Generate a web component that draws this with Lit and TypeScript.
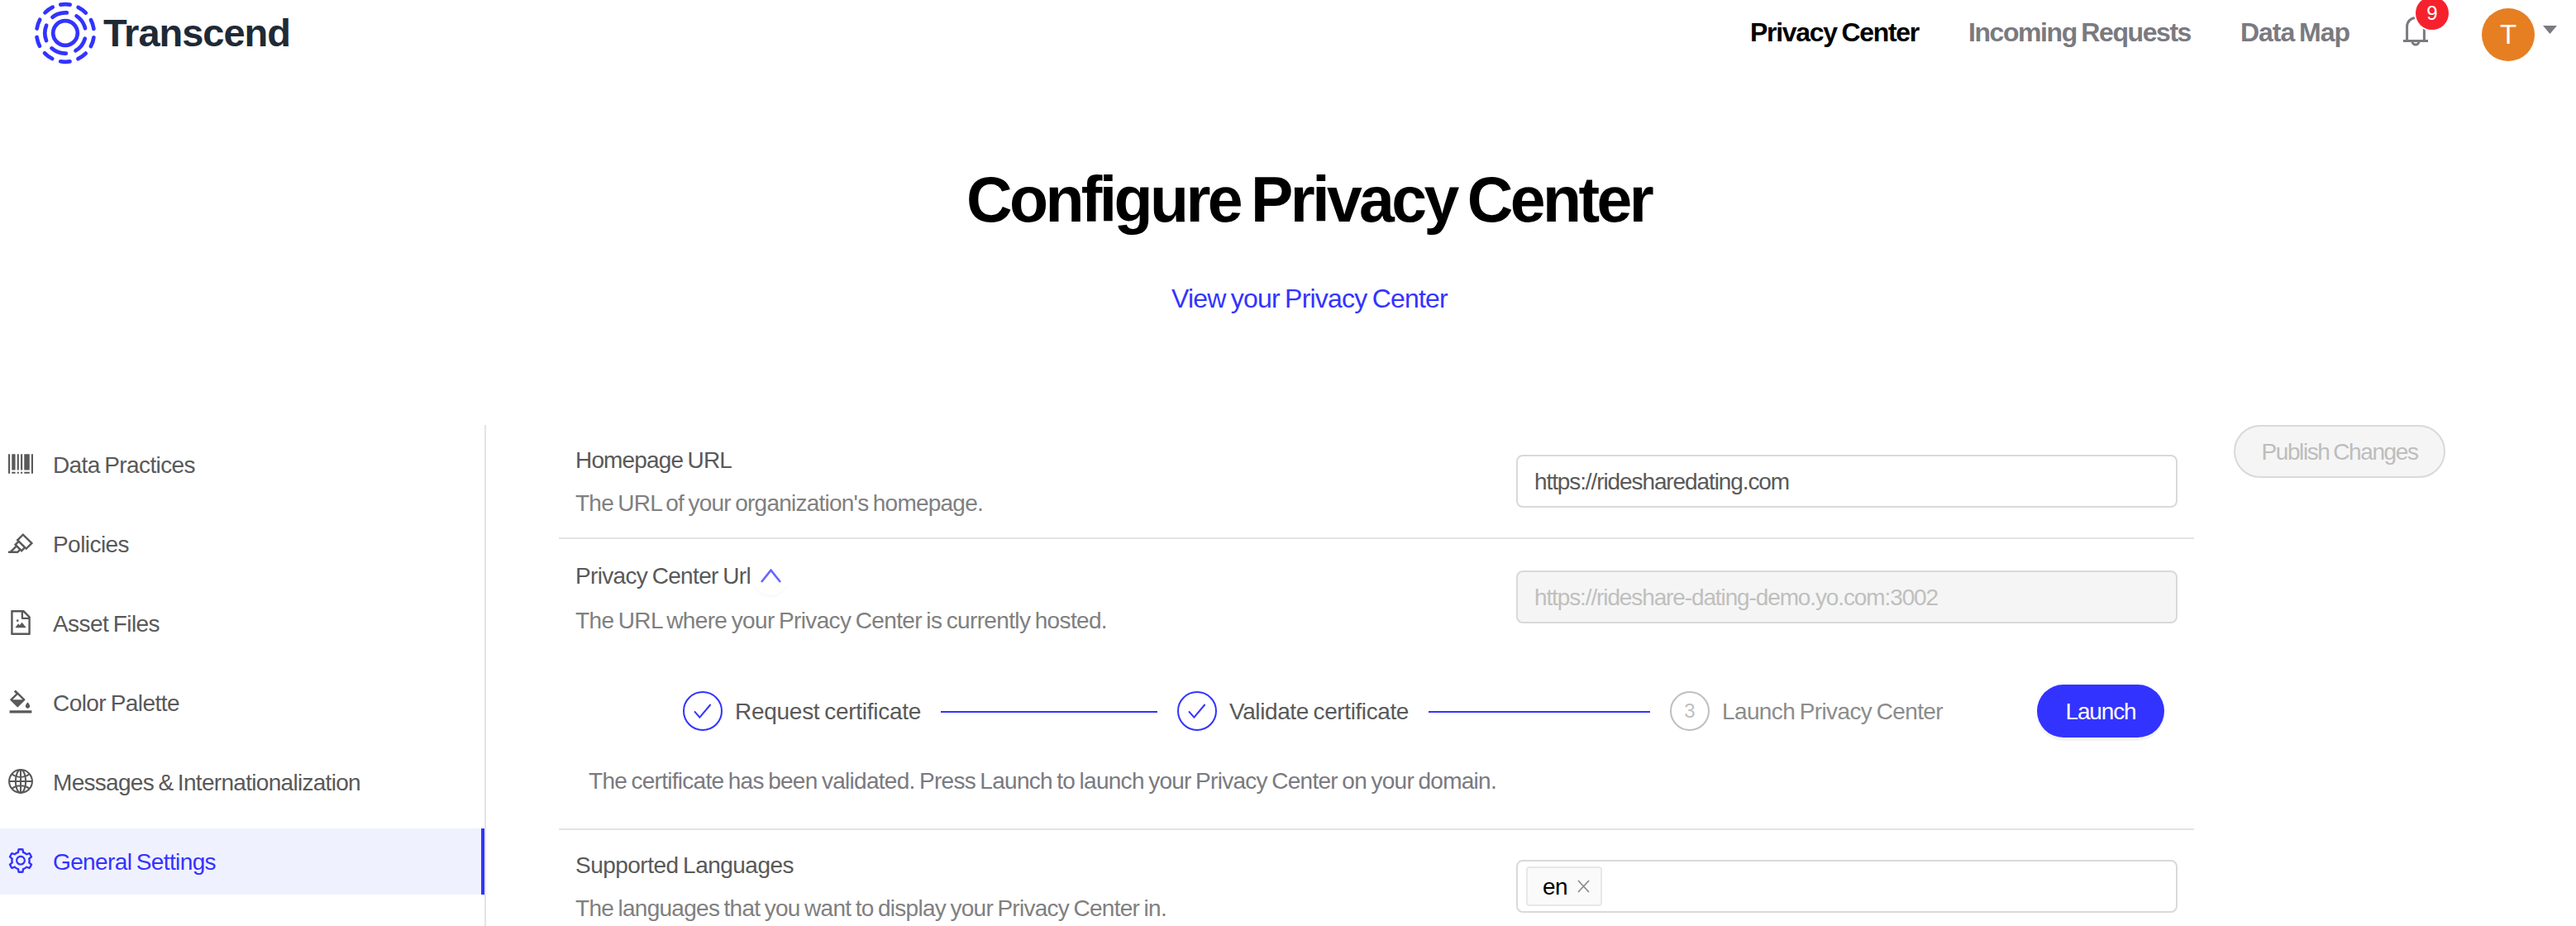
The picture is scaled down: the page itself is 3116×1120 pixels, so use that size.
import { LitElement, html, svg, css, nothing, type TemplateResult } from "lit";
import { customElement, property } from "lit/decorators.js";
import { classMap } from "lit/directives/class-map.js";

/** A single line of text whose letter spacing is tuned so that it spans `width` pixels. */
@customElement("tracked-text")
class TrackedText extends LitElement {
  @property({ type: Number }) width = 0;

  static styles = css`
    :host {
      display: inline-block;
      white-space: nowrap;
      word-spacing: -0.06em;
    }
  `;

  firstUpdated() {
    const length = (this.textContent ?? "").length;
    if (!this.width || !length) return;
    const natural = this.getBoundingClientRect().width;
    this.style.letterSpacing = `${(this.width - natural) / length}px`;
  }

  render() {
    return html`<slot></slot>`;
  }
}

const line = (text: string, width: number) =>
  html`<tracked-text class="text" .width=${width}>${text}</tracked-text>`;

const icons: Record<string, TemplateResult> = {
  barcode: svg`<path d="M64 160h64v704H64zM897 160h64v704h-64zM192 160h128v576H192zM384 160h64v576h-64zM513 160h64v576h-64zM639 160h194v576H639zM192 800h129v64H192zM384 800h64v64h-64zM513 800h64v64h-64zM640 800h193v64H640z"/>`,
  highlight: svg`<path d="M957.6 507.4L603.2 158.2a7.9 7.9 0 0 0-11.2 0L353.3 393.4a8.03 8.03 0 0 0-.1 11.3l.1.1 40 39.4-117.2 115.3a8.03 8.03 0 0 0-.1 11.3l.1.1 39.5 38.9-189.1 187H72.1c-4.4 0-8.1 3.6-8.1 8V860c0 4.4 3.6 8 8 8h344.9c2.1 0 4.1-.8 5.6-2.3l76.1-75.6 40.4 39.8a7.9 7.9 0 0 0 11.2 0l117.1-115.6 40.1 39.5a7.9 7.9 0 0 0 11.2 0l238.7-235.2c3.4-3 3.4-8 .3-11.2zM389.8 796.2H229.6l134.4-133 80.1 78.9-54.3 54.1zm154.8-62.1L373.2 565.2l68.6-67.6 171.4 168.9-68.6 67.6zM713.1 658L450.3 399.1 597.6 254l262.8 259-147.3 145z"/>`,
  fileImage: svg`<path d="M553.1 509.1l-77.8 99.2-41.1-52.4a8 8 0 0 0-12.6 0l-99.8 127.2a7.98 7.98 0 0 0 6.3 12.9H696c6.7 0 10.4-7.7 6.3-12.9l-136.5-174a8.1 8.1 0 0 0-12.7 0zM360 442a40 40 0 1 0 80 0 40 40 0 1 0-80 0zm494.6-153.4L639.4 73.4c-6-6-14.1-9.4-22.6-9.4H192c-17.7 0-32 14.3-32 32v832c0 17.7 14.3 32 32 32h640c17.7 0 32-14.3 32-32V311.3c0-8.5-3.4-16.7-9.4-22.7zM790.2 326H602V137.8L790.2 326zm1.8 562H232V136h302v216a42 42 0 0 0 42 42h216v494z"/>`,
  bgColors: svg`<path d="M766.4 744.3c43.7 0 79.4-36.2 79.4-80.5 0-53.5-79.4-140.8-79.4-140.8S687 610.3 687 663.8c0 44.3 35.7 80.5 79.4 80.5zm-377.1-44.1c7.1 7.1 18.6 7.1 25.6 0l256.1-256c7.1-7.1 7.1-18.6 0-25.6l-256-256c-.6-.6-1.3-1.2-2-1.7l-78.2-78.2a9.11 9.11 0 0 0-12.8 0l-48 48a9.11 9.11 0 0 0 0 12.8l67.2 67.2-207.8 207.9c-7.1 7.1-7.1 18.6 0 25.6l255.9 256zm12.9-448.6l178.9 178.9H223.4l178.8-178.9zM904 816H120c-4.4 0-8 3.6-8 8v80c0 4.4 3.6 8 8 8h784c4.4 0 8-3.6 8-8v-80c0-4.4-3.6-8-8-8z"/>`,
  globe: svg`<g fill="none" stroke="currentColor" stroke-width="62"><circle cx="512" cy="512" r="416"/><ellipse cx="512" cy="512" rx="184" ry="416"/><path d="M512 96v832M96 512h832M196 250q140 106 316 106t316-106M196 774q140-106 316-106t316 106"/></g>`,
  setting: svg`<path d="M924.8 625.7l-65.5-56c3.1-19 4.7-38.4 4.7-57.8s-1.6-38.8-4.7-57.8l65.5-56a32.03 32.03 0 0 0 9.3-35.2l-.9-2.6a443.74 443.74 0 0 0-79.7-137.9l-1.8-2.1a32.12 32.12 0 0 0-35.1-9.5l-81.3 28.9c-30-24.6-63.5-44-99.7-57.6l-15.7-85a32.05 32.05 0 0 0-25.8-25.7l-2.7-.5c-52.1-9.4-106.9-9.4-159 0l-2.7.5a32.05 32.05 0 0 0-25.8 25.7l-15.8 85.4a351.86 351.86 0 0 0-99 57.4l-81.9-29.1a32 32 0 0 0-35.1 9.5l-1.8 2.1a446.02 446.02 0 0 0-79.7 137.9l-.9 2.6c-4.5 12.5-.8 26.5 9.3 35.2l66.3 56.6c-3.1 18.8-4.6 38-4.6 57.1 0 19.2 1.5 38.4 4.6 57.1L99 625.5a32.03 32.03 0 0 0-9.3 35.2l.9 2.6c18.1 50.4 44.9 96.9 79.7 137.9l1.8 2.1a32.12 32.12 0 0 0 35.1 9.5l81.9-29.1c29.8 24.5 63.1 43.9 99 57.4l15.8 85.4a32.05 32.05 0 0 0 25.8 25.7l2.7.5a449.4 449.4 0 0 0 159 0l2.7-.5a32.05 32.05 0 0 0 25.8-25.7l15.7-85a350 350 0 0 0 99.7-57.6l81.3 28.9a32 32 0 0 0 35.1-9.5l1.8-2.1c34.8-41.1 61.6-87.5 79.7-137.9l.9-2.6c4.5-12.3.8-26.3-9.3-35zM788.3 465.9c2.5 15.1 3.8 30.6 3.8 46.1s-1.3 31-3.8 46.1l-6.6 40.1 74.7 63.9a370.03 370.03 0 0 1-42.6 73.6L721 702.8l-31.4 25.8c-23.9 19.6-50.5 35-79.3 45.8l-38.1 14.3-17.9 97a377.5 377.5 0 0 1-85 0l-17.9-97.2-37.8-14.5c-28.5-10.8-55-26.2-78.7-45.7l-31.4-25.9-93.4 33.2c-17-22.9-31.2-47.6-42.6-73.6l75.5-64.5-6.5-40c-2.4-14.9-3.7-30.3-3.7-45.5 0-15.3 1.2-30.6 3.7-45.5l6.5-40-75.5-64.5c11.3-26.1 25.6-50.7 42.6-73.6l93.4 33.2 31.4-25.9c23.7-19.5 50.2-34.9 78.7-45.7l37.9-14.3 17.9-97.2c28.1-3.2 56.8-3.2 85 0l17.9 97 38.1 14.3c28.7 10.8 55.4 26.2 79.3 45.8l31.4 25.8 92.8-32.9c17 22.9 31.2 47.6 42.6 73.6L781.8 426l6.5 39.9zM512 326c-97.2 0-176 78.8-176 176s78.8 176 176 176 176-78.8 176-176-78.8-176-176-176zm79.2 255.2A111.6 111.6 0 0 1 512 614c-29.9 0-58-11.7-79.2-32.8A111.6 111.6 0 0 1 400 502c0-29.9 11.7-58 32.8-79.2C454 401.6 482.1 390 512 390c29.9 0 58 11.6 79.2 32.8A111.6 111.6 0 0 1 624 502c0 29.9-11.7 58-32.8 79.2z"/>`,
};

interface MenuItem {
  icon: string;
  text: string;
  width: number;
  active?: boolean;
}

const menu: MenuItem[] = [
  { icon: "barcode", text: "Data Practices", width: 172 },
  { icon: "highlight", text: "Policies", width: 92 },
  { icon: "fileImage", text: "Asset Files", width: 129 },
  { icon: "bgColors", text: "Color Palette", width: 153 },
  { icon: "globe", text: "Messages & Internationalization", width: 372 },
  { icon: "setting", text: "General Settings", width: 197, active: true },
];

const check = html`<svg class="check" viewBox="0 0 22 18">
  <path d="M1 9.3 L7.4 16.6 L20.6 1" />
</svg>`;

@customElement("app-root")
class AppRoot extends LitElement {
  static styles = css`
    :host {
      display: block;
      font-family: "Liberation Sans", Arial, sans-serif;
      font-size: 28px;
      line-height: 44px;
      color: #595959;
      background: #fff;
    }
    * {
      box-sizing: border-box;
    }
    svg {
      display: block;
      flex: none;
    }
    .page {
      height: 1120px;
      display: flex;
      flex-direction: column;
      overflow: hidden;
    }

    .header {
      height: 80px;
      flex: none;
      display: flex;
      justify-content: space-between;
      padding: 0 23px 0 41px;
    }
    .brand {
      display: flex;
      align-items: center;
      gap: 8px;
      color: #1f2a36;
      font-weight: 700;
      font-size: 47px;
      line-height: 80px;
    }
    .rings {
      width: 76px;
      height: 76px;
      fill: none;
      stroke: #33f;
      stroke-width: 4.7;
      stroke-linecap: round;
    }
    .nav {
      display: flex;
      align-items: flex-start;
      color: #7a7a80;
      font-size: 32px;
      font-weight: 700;
      line-height: 48px;
    }
    .nav-link {
      margin: 15px 60px 0 0;
    }
    .nav-link.current {
      color: #000;
    }
    .bell {
      position: relative;
      margin: 20px 65px 0 5px;
    }
    .bell-icon {
      width: 30px;
      height: 36px;
      fill: none;
      stroke: #7a7a80;
      stroke-width: 3;
    }
    .badge {
      position: absolute;
      left: 15px;
      top: -24px;
      width: 40px;
      height: 40px;
      border-radius: 20px;
      background: #f5222d;
      box-shadow: 0 0 0 2px #fff;
      color: #fff;
      font-size: 24px;
      font-weight: 400;
      line-height: 40px;
      text-align: center;
    }
    .avatar {
      width: 64px;
      height: 64px;
      margin: 10px 10px 0 0;
      border-radius: 50%;
      background: #e67f22;
      color: #fff;
      font-size: 33px;
      font-weight: 400;
      line-height: 63px;
      text-align: center;
    }
    .caret {
      width: 17px;
      height: 10px;
      margin-top: 31px;
      fill: #7a7a80;
    }

    .hero {
      flex: none;
      height: 434px;
      padding: 113px 0 0 52px;
      display: flex;
      flex-direction: column;
      align-items: center;
      gap: 48px;
    }
    .title {
      margin: 0 2px 0 0;
      color: #000;
      font-size: 77px;
      font-weight: 700;
      line-height: 96px;
    }
    .view-link {
      color: #33f;
      font-size: 32px;
      line-height: 48px;
    }

    .body {
      flex: 1;
      min-height: 0;
      display: flex;
      align-items: stretch;
    }
    .sidebar {
      width: 588px;
      flex: none;
      padding-top: 8px;
      border-right: 2px solid #e4e4e4;
      display: flex;
      flex-direction: column;
      gap: 16px;
    }
    .item {
      height: 80px;
      flex: none;
      display: flex;
      align-items: center;
      gap: 24px;
      padding-left: 10px;
    }
    .item .text,
    .step .text {
      padding-top: 2px;
    }
    .item.active {
      background: #f0f1ff;
      border-right: 4px solid #33f;
      color: #33f;
    }
    .item-icon {
      width: 30px;
      height: 30px;
      margin-bottom: 2px;
      fill: currentColor;
    }
    .content {
      width: 1978px;
      flex: none;
      margin: 0 48px 0 88px;
    }
    .setting {
      padding: 20px;
      border-bottom: 2px solid #e4e4e4;
    }
    .setting.hosted {
      padding: 22px 20px 35px;
    }
    .fields {
      display: flex;
      justify-content: space-between;
      align-items: flex-start;
    }
    .labels {
      display: flex;
      flex-direction: column;
      gap: 8px;
      margin: 1px 0 -1px;
    }
    .hosted .labels {
      gap: 10px;
    }
    .label {
      display: flex;
      height: 44px;
    }
    .hint {
      height: 44px;
      color: #808080;
    }
    .collapse {
      width: 44px;
      height: 44px;
      margin-left: 2px;
      border-radius: 50%;
      box-shadow: 0 4px 0 rgba(0, 0, 0, 0.015);
      display: flex;
      justify-content: center;
      padding-top: 13px;
    }
    .chevron {
      width: 25px;
      height: 17px;
      fill: none;
      stroke: #66f;
      stroke-width: 2.6;
    }
    .input {
      width: 800px;
      height: 64px;
      margin-top: 16px;
      border: 2px solid #d9d9d9;
      border-radius: 8px;
      padding: 0 20px;
      line-height: 61px;
      display: flex;
    }
    .input.disabled {
      background: #f5f5f5;
      color: #bfbfbf;
    }
    .input.tags {
      padding: 6px 10px;
    }
    .tag {
      width: 92px;
      height: 48px;
      border: 2px solid #e8e8e8;
      border-radius: 4px;
      background: #fafafa;
      color: #000;
      line-height: 46px;
      padding-left: 18px;
      display: flex;
      gap: 12px;
    }
    .remove {
      width: 15px;
      height: 16px;
      margin-top: 14px;
      fill: none;
      stroke: #8c8c8c;
      stroke-width: 1.8;
    }

    .wizard {
      margin: 56px 16px 0 130px;
      display: flex;
      align-items: center;
      justify-content: space-between;
    }
    .steps {
      display: grid;
      grid-template-columns: 288px 262px 280px 268px 332px;
      column-gap: 24px;
      align-items: center;
    }
    .step {
      height: 48px;
      display: flex;
      align-items: center;
      gap: 15px;
    }
    .step.waiting {
      color: #8c8c8c;
    }
    .dot {
      width: 48px;
      height: 48px;
      flex: none;
      border: 2px solid #33f;
      border-radius: 50%;
      display: flex;
      align-items: center;
      justify-content: center;
    }
    .waiting .dot {
      border-color: #bfbfbf;
      color: #bfbfbf;
      font-size: 24px;
    }
    .check {
      width: 22px;
      height: 18px;
      fill: none;
      stroke: #33f;
      stroke-width: 2;
    }
    .rail {
      height: 2px;
      align-self: start;
      margin-top: 24px;
      background: #33f;
    }
    .button {
      height: 64px;
      flex: none;
      border-radius: 32px;
      line-height: 62px;
      display: flex;
      justify-content: center;
    }
    .launch {
      width: 154px;
      background: #33f;
      color: #fff;
      line-height: 65px;
      box-shadow: 0 4px 0 rgba(0, 0, 0, 0.045);
    }
    .publish {
      width: 256px;
      border: 2px solid #d9d9d9;
      background: #f5f5f5;
      color: #bdbdbd;
    }
    .status {
      height: 44px;
      margin: 31px 0 0 16px;
      color: #7a7a80;
    }
  `;

  private header() {
    return html`<header class="header">
      <div class="brand">
        <svg class="rings" viewBox="-38 -38 76 76">
          <circle r="14.8" />
          <circle r="24.7" stroke-dasharray="18.7 12.34" transform="rotate(158.3)" />
          <circle r="34.8" stroke-dasharray="11.4 10.466" transform="rotate(-99.4)" />
        </svg>
        ${line("Transcend", 226)}
      </div>
      <nav class="nav">
        <span class="nav-link current">${line("Privacy Center", 204)}</span>
        <span class="nav-link">${line("Incoming Requests", 269)}</span>
        <span class="nav-link">${line("Data Map", 132)}</span>
        <div class="bell">
          <svg class="bell-icon" viewBox="0 0 30 36">
            <path d="M4.6 29 V12 A10.4 10.5 0 0 1 25.4 12 V29 M0 29.4 H30 M11 30 a4 4 0 0 0 8 0" />
          </svg>
          <span class="badge">9</span>
        </div>
        <div class="avatar">T</div>
        <svg class="caret" viewBox="0 0 17 10"><path d="M0 0h17L8.5 10z" /></svg>
      </nav>
    </header>`;
  }

  private sidebar() {
    return html`<aside class="sidebar">
      ${menu.map(
        (item) => html`<div class=${classMap({ item: true, active: !!item.active })}>
          <svg class="item-icon" viewBox="64 64 896 896">${icons[item.icon]}</svg>
          ${line(item.text, item.width)}
        </div>`,
      )}
    </aside>`;
  }

  private labels(label: TemplateResult, hint: TemplateResult, open = false) {
    return html`<div class="labels">
      <div class="label">
        ${label}
        ${open
          ? html`<span class="collapse">
              <svg class="chevron" viewBox="0 0 25 17"><path d="M1 16 L12.5 1.6 L24 16" /></svg>
            </span>`
          : nothing}
      </div>
      <div class="hint">${hint}</div>
    </div>`;
  }

  private wizard() {
    return html`<div class="wizard">
      <div class="steps">
        <div class="step"><span class="dot">${check}</span>${line("Request certificate", 225)}</div>
        <span class="rail"></span>
        <div class="step"><span class="dot">${check}</span>${line("Validate certificate", 217)}</div>
        <span class="rail"></span>
        <div class="step waiting"><span class="dot">3</span>${line("Launch Privacy Center", 267)}</div>
      </div>
      <div class="button launch">${line("Launch", 85)}</div>
    </div>`;
  }

  render() {
    return html`<div class="page">
      ${this.header()}
      <section class="hero">
        <h1 class="title">${line("Configure Privacy Center", 828)}</h1>
        <a class="view-link">${line("View your Privacy Center", 334)}</a>
      </section>
      <div class="body">
        ${this.sidebar()}
        <main class="content">
          <section class="setting">
            <div class="fields">
              ${this.labels(
                line("Homepage URL", 189),
                line("The URL of your organization's homepage.", 493),
              )}
              <div class="input">${line("https://ridesharedating.com", 308)}</div>
            </div>
          </section>
          <section class="setting hosted">
            <div class="fields">
              ${this.labels(
                line("Privacy Center Url", 212),
                line("The URL where your Privacy Center is currently hosted.", 643),
                true,
              )}
              <div class="input disabled">${line("https://rideshare-dating-demo.yo.com:3002", 488)}</div>
            </div>
            ${this.wizard()}
            <div class="status">
              ${line(
                "The certificate has been validated. Press Launch to launch your Privacy Center on your domain.",
                1098,
              )}
            </div>
          </section>
          <section class="setting">
            <div class="fields">
              ${this.labels(
                line("Supported Languages", 264),
                line("The languages that you want to display your Privacy Center in.", 715),
              )}
              <div class="input tags">
                <span class="tag">
                  ${line("en", 30)}
                  <svg class="remove" viewBox="0 0 15 16"><path d="M1 1 L14 15 M14 1 L1 15" /></svg>
                </span>
              </div>
            </div>
          </section>
        </main>
        <div class="button publish">${line("Publish Changes", 189)}</div>
      </div>
    </div>`;
  }
}
